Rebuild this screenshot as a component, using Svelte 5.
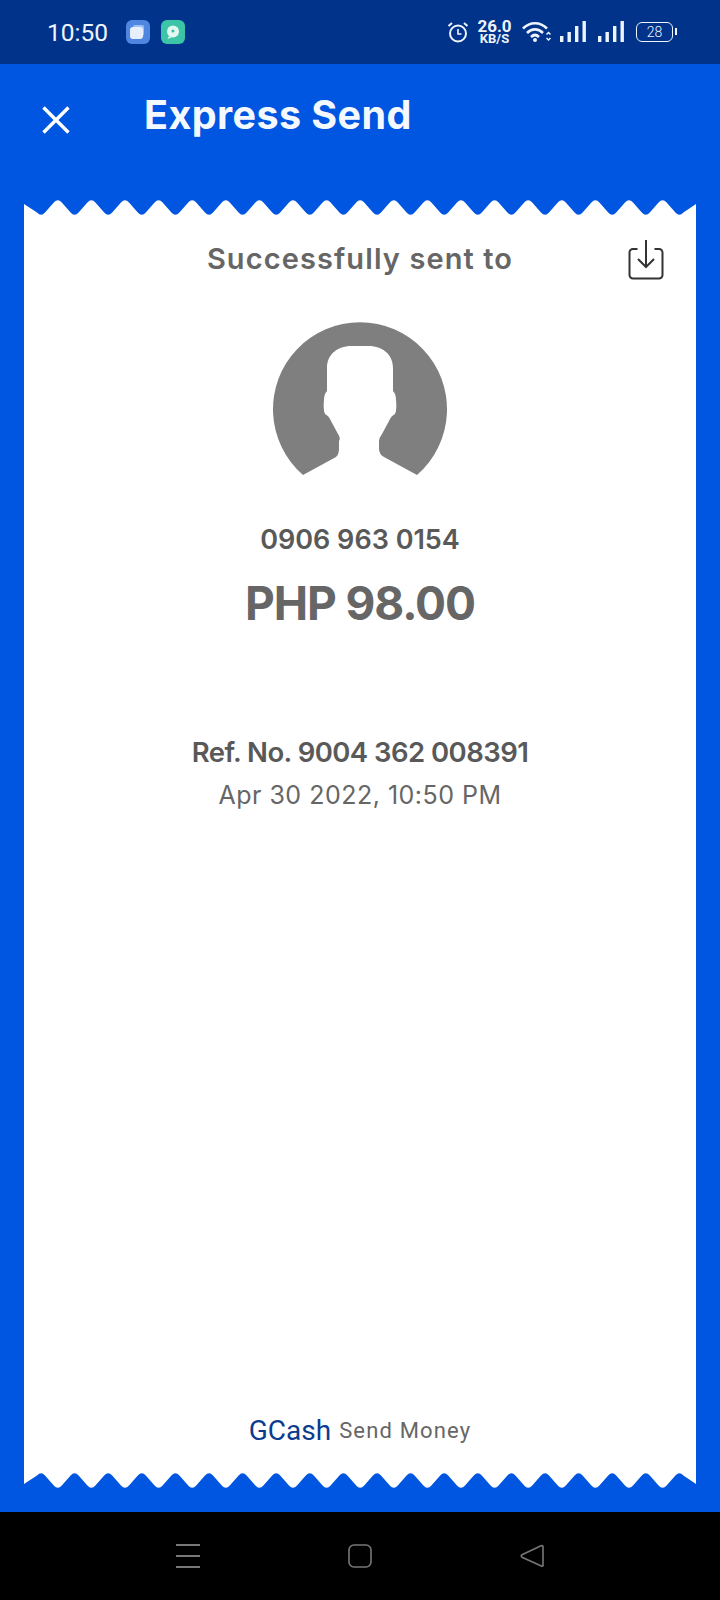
<script>
  const width = 672
  const period = 33.6
  const depth = 15

  // zig-zag edge of the receipt; each tip is a curve tangent to the straight flanks
  function teeth(phase) {
    const r = 4
    const over = 2
    const slope = (depth + 2 * over) / (period / 2)
    let d = `M0 ${depth + 2} L0 4 `
    let x = phase
    let up = false
    while (x < width) {
      const ctrl = up ? -over : depth + over
      const off = up ? ctrl + r * slope : ctrl - r * slope
      d += `L${(x - r).toFixed(1)} ${off.toFixed(2)} Q${x.toFixed(1)} ${ctrl} ${(x + r).toFixed(1)} ${off.toFixed(2)} `
      x += period / 2
      up = !up
    }
    return d + `L${width} 4 L${width} ${depth + 2} Z`
  }

  const edge = teeth(17)
</script>

<div class="screen">
  <div class="status">
    <span class="time">10:50</span>
    <svg class="app" viewBox="0 0 24 24" aria-hidden="true">
      <rect width="24" height="24" rx="6" fill="#4f86e0" />
      <rect x="7" y="5" width="11" height="11" rx="2" fill="#9fc0f2" />
      <rect x="4" y="7" width="13" height="12" rx="3" fill="#e6effb" />
    </svg>
    <svg class="app" viewBox="0 0 24 24" aria-hidden="true">
      <rect width="24" height="24" rx="6" fill="#3cc4a6" />
      <circle cx="12" cy="11.5" r="6" fill="#e4f7f2" />
      <circle cx="12" cy="11" r="1.6" fill="#3cc4a6" />
      <path d="M8 16l-1.5 3 4-1.5z" fill="#e4f7f2" />
    </svg>

    <div class="status-right">
      <svg class="alarm" viewBox="0 0 22 22" aria-hidden="true">
        <circle cx="11" cy="12.5" r="8" fill="none" stroke="#eef4fd" stroke-width="2" />
        <path d="M11 8v5h3.500" fill="none" stroke="#eef4fd" stroke-width="1.600" />
        <path d="M1.500 5l3.500-3M20.500 5l-3.500-3" stroke="#eef4fd" stroke-width="2" />
      </svg>
      <div class="speed"><span>26.0</span><span class="unit">KB/S</span></div>
      <svg class="wifi" viewBox="0 0 30 24" aria-hidden="true">
        <path d="M1 8.500c7-7 17-7 24 0M5 13c4.800-4.800 11.200-4.800 16 0M9 17c2.500-2.500 5.500-2.500 8 0" fill="none" stroke="#eef4fd" stroke-width="2.600" />
        <circle cx="13" cy="20" r="2" fill="#eef4fd" />
        <path d="M24.500 14.500l2-2 2 2M24.500 18l2 2 2-2" fill="none" stroke="#eef4fd" stroke-width="1.500" />
      </svg>
      <svg class="bars" viewBox="0 0 26 22" aria-hidden="true">
        <rect x="0" y="15" width="3.400" height="6" fill="#eef4fd" />
        <rect x="7.500" y="11" width="3.400" height="10" fill="#eef4fd" />
        <rect x="15" y="5" width="3.400" height="16" fill="#eef4fd" />
        <rect x="22.500" y="0" width="3.400" height="21" fill="#eef4fd" />
      </svg>
      <svg class="bars" viewBox="0 0 26 22" aria-hidden="true">
        <rect x="0" y="15" width="3.400" height="6" fill="#eef4fd" />
        <rect x="7.500" y="11" width="3.400" height="10" fill="#eef4fd" />
        <rect x="15" y="5" width="3.400" height="16" fill="#eef4fd" />
        <rect x="22.500" y="0" width="3.400" height="21" fill="#eef4fd" />
      </svg>
      <div class="battery"><span>28</span></div>
    </div>
  </div>

  <main class="page">
    <header class="bar">
      <svg class="close" viewBox="0 0 28 28" aria-hidden="true">
        <path d="M1.500 1.500l25 25M26.500 1.500l-25 25" stroke="#fff" stroke-width="3.400" fill="none" />
      </svg>
      <h1>Express Send</h1>
    </header>

    <section class="receipt">
      <svg class="edge" viewBox="0 0 672 17" aria-hidden="true"><path d={edge} fill="#fff" /></svg>
      <div class="paper">
        <div class="sent-row">
          <h2>Successfully sent to</h2>
          <svg class="save" viewBox="0 0 36 41" aria-hidden="true">
            <path d="M9.500 10H5a3.500 3.500 0 0 0-3.500 3.500v22.500A3.500 3.500 0 0 0 5 39.500h26a3.500 3.500 0 0 0 3.500-3.500v-22.500A3.500 3.500 0 0 0 31 10h-4.500" fill="none" stroke="#333" stroke-width="2" />
            <path d="M18 1v27M10 20l8 8 8-8" fill="none" stroke="#333" stroke-width="2" />
          </svg>
        </div>

        <svg class="avatar" viewBox="273 322 174 154" aria-hidden="true">
          <path fill="#7f7f7f" d="M303 475A87 87 0 1 1 417 475L384 457Q379 454 379 449V441Q379 438 382 434L389 421Q391 416 395 414Q397 410 396 400Q396 394 393 391V368C393 353 381 346 368 346H352C339 346 327 353 327 368V391Q324 394 324 400Q323 410 325 414Q329 416 331 421L338 434Q341 438 339 441V449Q339 454 336 457Z" />
        </svg>

        <p class="phone">0906 963 0154</p>
        <p class="amount">PHP 98.00</p>
        <p class="ref">Ref. No. 9004 362 008391</p>
        <p class="date">Apr 30 2022, 10:50 PM</p>

        <div class="brand">
          <span class="gcash">GCash</span>
          <span class="service">Send Money</span>
        </div>
      </div>
      <svg class="edge flip" viewBox="0 0 672 17" aria-hidden="true"><path d={edge} fill="#fff" /></svg>
    </section>
  </main>

  <nav class="nav">
    <svg class="nav-icon" viewBox="0 0 24 24" aria-hidden="true">
      <path d="M0 1h24M0 12h24M0 23h24" stroke="#777" stroke-width="2" fill="none" />
    </svg>
    <svg class="nav-icon" viewBox="0 0 24 24" aria-hidden="true">
      <rect x="1" y="1" width="22" height="22" rx="5" stroke="#777" stroke-width="1.600" fill="none" />
    </svg>
    <svg class="nav-icon back" viewBox="0 0 24 24" aria-hidden="true">
      <path d="M22 1.500c.6 0 1 .4 1 1v19c0 .6-.5 1-1.100.7L2 13.200c-1-.6-1-1.800 0-2.400L21 1.800z" stroke="#777" stroke-width="1.600" fill="none" />
    </svg>
  </nav>
</div>

<style>
  :global(body) {
    margin: 0;
  }

  .screen {
    width: 720px;
    height: 1600px;
    display: flex;
    flex-direction: column;
    font-family: Inter, "Liberation Sans", sans-serif;
    overflow: hidden;
  }

  .status {
    height: 64px;
    flex: none;
    display: flex;
    align-items: center;
    padding: 0 47px 0 47px;
    background: #01338a;
    color: #eef4fd;
  }

  .time {
    font-family: Roboto, sans-serif;
    font-size: 24.500px;
    width: 79px;
  }

  .app {
    width: 24px;
    height: 24px;
    margin-right: 11px;
  }

  .status-right {
    margin-left: auto;
    display: flex;
    align-items: center;
  }

  .alarm {
    width: 22px;
    height: 22px;
    margin-right: 9px;
  }

  .speed {
    display: flex;
    flex-direction: column;
    align-items: center;
    width: 33px;
    font-family: Roboto, sans-serif;
    font-weight: 700;
    font-size: 17px;
    line-height: 13px;
    margin-right: 11px;
  }

  .unit {
    font-size: 13px;
    line-height: 11px;
  }

  .wifi {
    width: 30px;
    height: 24px;
    margin-right: 8px;
  }

  .bars {
    width: 26px;
    height: 22px;
    margin-right: 12px;
  }

  .battery {
    width: 37px;
    height: 20px;
    box-sizing: border-box;
    border: 1.500px solid #eef4fd;
    border-radius: 6px;
    display: flex;
    align-items: center;
    justify-content: center;
    font-family: Roboto, sans-serif;
    font-size: 14px;
    font-weight: 300;
    position: relative;
  }

  .battery::after {
    content: "";
    position: absolute;
    right: -5px;
    top: 5px;
    width: 2px;
    height: 7px;
    background: #eef4fd;
  }

  .page {
    flex: 1;
    background: #0056e0;
    display: flex;
    flex-direction: column;
    padding: 0 24px 24px;
  }

  .bar {
    height: 136px;
    flex: none;
    display: flex;
    align-items: flex-start;
  }

  .close {
    width: 28px;
    height: 28px;
    margin: 42px 0 0 18px;
  }

  h1 {
    margin: 26px 0 0 74px;
    font-size: 39.500px;
    line-height: 50px;
    font-weight: 700;
    letter-spacing: 0.4px;
    color: #f4f9ff;
  }

  .receipt {
    flex: 1;
    display: flex;
    flex-direction: column;
  }

  .edge {
    display: block;
    width: 672px;
    height: 17px;
    flex: none;
  }

  .flip {
    transform: scaleY(-1);
    margin-top: -2px;
  }

  .paper {
    flex: 1;
    margin-top: -2px;
    background: #fff;
    display: flex;
    flex-direction: column;
    align-items: center;
    color: #666;
    text-align: center;
  }

  .sent-row {
    width: 100%;
    height: 107px;
    flex: none;
    position: relative;
  }

  h2 {
    margin: 26px 0 0;
    font-size: 29px;
    line-height: 36px;
    font-weight: 600;
    letter-spacing: 1.1px;
    color: #666;
  }

  .save {
    position: absolute;
    left: 604px;
    top: 24px;
    width: 36px;
    height: 41px;
  }

  .avatar {
    width: 174px;
    height: 154px;
    display: block;
    flex: none;
  }

  p {
    margin: 0;
  }

  .phone {
    margin-top: 46px;
    font-size: 27px;
    line-height: 36px;
    font-weight: 600;
    color: #595959;
  }

  .amount {
    margin-top: 15px;
    font-size: 46px;
    line-height: 60px;
    font-weight: 700;
    letter-spacing: -1.1px;
    color: #666;
  }

  .ref {
    margin-top: 101px;
    font-size: 27.500px;
    line-height: 36px;
    font-weight: 600;
    letter-spacing: -0.55px;
    color: #595959;
  }

  .date {
    margin-top: 7px;
    font-size: 25px;
    line-height: 36px;
    font-weight: 400;
    letter-spacing: 0.5px;
    color: #666;
  }

  .brand {
    margin-top: auto;
    margin-bottom: 26px;
    display: flex;
    align-items: center;
    gap: 8px;
    font-family: Roboto, sans-serif;
  }

  .gcash {
    font-size: 28px;
    color: #0b3c8f;
  }

  .service {
    font-size: 22px;
    letter-spacing: 1.15px;
    color: #666;
  }

  .nav {
    height: 88px;
    flex: none;
    background: #000;
    display: flex;
    justify-content: center;
    gap: 148px;
    padding-top: 32px;
    box-sizing: border-box;
  }

  .nav-icon {
    width: 24px;
    height: 24px;
  }
</style>
